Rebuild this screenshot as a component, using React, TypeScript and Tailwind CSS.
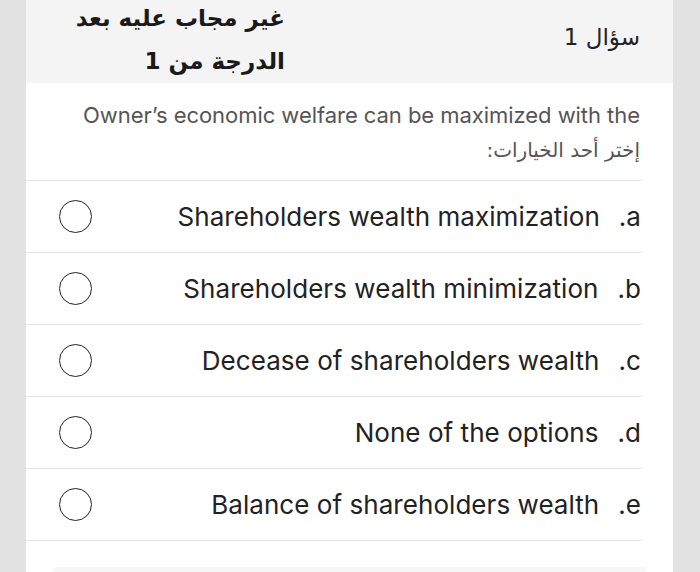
const options = [
  { key: 'a', text: 'Shareholders wealth maximization' },
  { key: 'b', text: 'Shareholders wealth minimization' },
  { key: 'c', text: 'Decease of shareholders wealth' },
  { key: 'd', text: 'None of the options' },
  { key: 'e', text: 'Balance of shareholders wealth' },
];

function Radio() {
  return <span className="block h-[33px] w-[33px] shrink-0 rounded-full border-[1.5px] border-[#222]" />;
}

export default function App() {
  return (
    <div className="flex h-[572px] w-[700px] overflow-hidden bg-gradient-to-r from-[#e2e2e2] via-[#e9e9e9] to-[#e2e2e2] font-['Inter','DejaVu_Sans',sans-serif]">
      <div dir="rtl" className="ml-[26px] flex w-[647px] flex-col bg-white">
        <div className="flex h-[83px] items-start justify-between bg-[#f4f4f4] pr-[33px] pl-[20px]">
          <div className="mt-[20px] text-[23px] text-[#222] font-['DejaVu_Sans',sans-serif]">سؤال 1</div>
          <div className="w-[239px] -mt-[3px] text-right text-[23px] font-bold leading-[43px] text-[#1a1a1a] font-['DejaVu_Sans',sans-serif]">
            <div>غير مجاب عليه بعد</div>
            <div>الدرجة من 1</div>
          </div>
        </div>

        <div className="pr-[33px] pl-[20px] pt-[15px] pb-[12px] text-[#555]">
          <p dir="ltr" className="text-right text-[22px] leading-[35px] tracking-[-0.05px]">Owner’s economic welfare can be maximized with the</p>
          <p className="text-[20px] leading-[35px] font-['DejaVu_Sans',sans-serif]">إختر أحد الخيارات:</p>
        </div>

        <div className="mr-[32px] border-t border-[#e4e4e4]">
          {options.map((o) => (
            <div key={o.key} dir="ltr" className="flex h-[72px] items-center border-b border-[#e4e4e4] pl-[33px]">
              <Radio />
              <div className="flex flex-1 items-center justify-end text-[26px] text-[#222] tracking-[0.05px]">
                <span>{o.text}</span>
                <span className="ml-[19px]">.{o.key}</span>
              </div>
            </div>
          ))}
        </div>

        <div className="mt-[26px] ml-[27px] mr-[27px] h-[20px] rounded-t-[3px] bg-[#f7f7f7]" />
      </div>
    </div>
  );
}
